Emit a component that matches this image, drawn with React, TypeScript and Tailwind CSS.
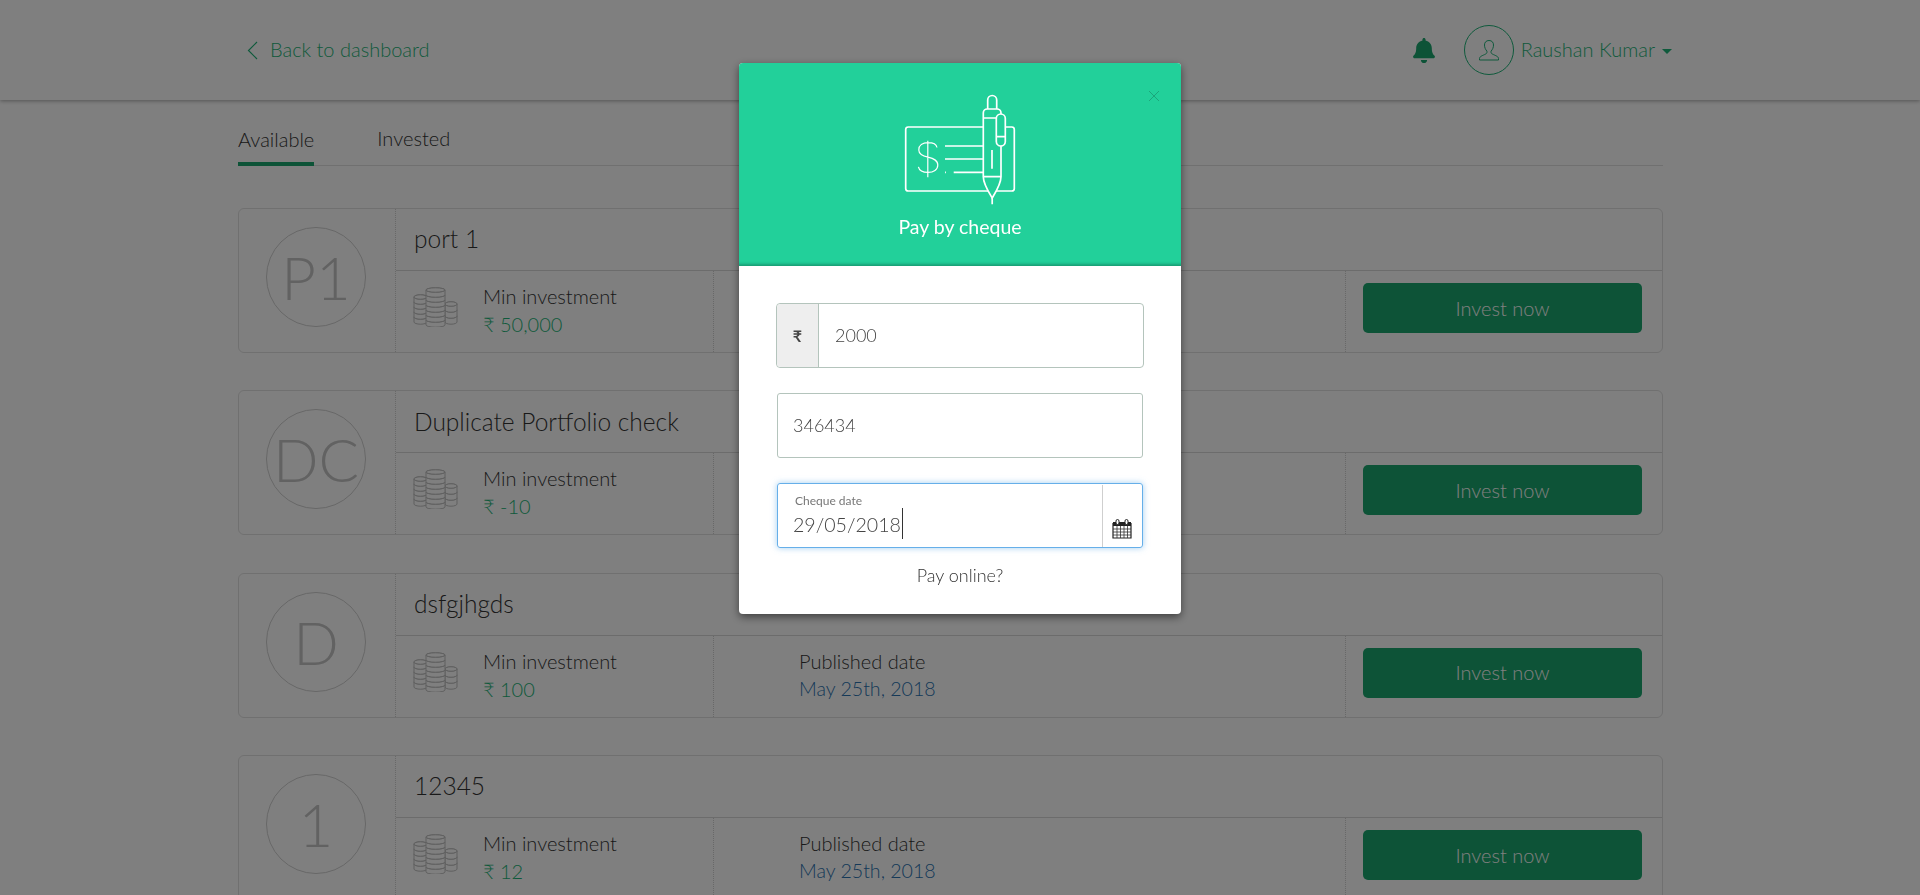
import { FaBell } from "react-icons/fa";

const fontStack = { fontFamily: "Lato, 'Noto Sans', sans-serif" };

type Portfolio = {
  initials: string;
  name: string;
  min: string;
};

const portfolios: Portfolio[] = [
  { initials: "P1", name: "port 1", min: "50,000" },
  { initials: "DC", name: "Duplicate Portfolio check", min: "-10" },
  { initials: "D", name: "dsfgjhgds", min: "100" },
  { initials: "1", name: "12345", min: "12" },
];

function Coins() {
  const stack = (x: number, w: number, top: number, count: number, step: number) => {
    const rx = w / 2;
    const cx = x + rx;
    const items = [];
    for (let i = count - 1; i >= 0; i--) {
      const y = top + i * step;
      items.push(
        <path
          key={i}
          d={`M${x} ${y + 2}a${rx} 2.2 0 0 1 ${w} 0v${step}a${rx} 2.2 0 0 1 -${w} 0z`}
          fill="#fff"
        />,
      );
      items.push(<path key={`t${i}`} d={`M${x} ${y + 2}a${rx} 2.2 0 0 0 ${w} 0`} fill="none" />);
    }
    items.push(<ellipse key="top" cx={cx} cy={top + 2} rx={rx} ry={2.2} fill="#fff" />);
    return items;
  };
  return (
    <svg width="46" height="40" viewBox="0 0 46 40" fill="none" stroke="#bebebe" strokeWidth="1" className="shrink-0 -ml-px">
      {stack(1, 13, 8, 5, 5)}
      {stack(32, 12, 15, 3, 6)}
      {stack(13, 19, 1, 7, 5)}
    </svg>
  );
}

function PortfolioCard({ item }: { item: Portfolio }) {
  return (
    <div className="flex h-[145px] rounded-md border border-[#e0e0e0] mb-[37.4px]">
      <div className="w-[156px] shrink-0 pt-[18px] pl-[27px]">
        <div className="flex h-[100px] w-[100px] items-center justify-center rounded-full border border-[#cfcfcf] text-[60px] font-light text-[#c4c4c4]">
          {item.initials}
        </div>
      </div>
      <div className="flex min-w-0 flex-1 flex-col border-l border-dotted border-[#d0d0d0]">
        <div className="flex h-[62px] shrink-0 items-center border-b border-[#d8d8d8] pl-[18px] text-[24.5px] font-light text-[#333]">
          {item.name}
        </div>
        <div className="flex flex-1">
          <div className="flex w-[317px] items-start pl-[18px] pt-[16px]">
            <Coins />
            <div className="ml-[24px] -mt-[4px]">
              <div className="text-[20px] leading-[27px] font-light text-[#333]">Min investment</div>
              <div className="text-[20px] leading-[28px] font-light text-[#1eb478]">₹ {item.min}</div>
            </div>
          </div>
          <div className="flex w-[632px] flex-col border-l border-dotted border-[#d0d0d0] pl-[85px] pt-[12px]">
            <div className="text-[20px] leading-[27px] font-light text-[#333]">Published date</div>
            <div className="text-[19.6px] leading-[28px] font-light text-[#2a72b0]">May 25th, 2018</div>
          </div>
          <div className="flex-1 border-l border-dotted border-[#d0d0d0] pl-[17px] pt-[12px]">
            <button className="h-[50px] w-[279px] rounded-[5px] bg-[#1ba66e] pb-px text-[20px] font-light text-white">
              Invest now
            </button>
          </div>
        </div>
      </div>
    </div>
  );
}

function ChequeIcon() {
  return (
    <svg width="120" height="120" viewBox="900 90 120 120" fill="none" stroke="#fff" strokeWidth="1.700" className="block">
      <rect x="905.7" y="127" width="108.6" height="64" rx="2.5" />
      <path d="M937 147.500c-.6-3.200-4-4.800-9-4.800-5.400 0-9.200 2.600-9.200 7.200 0 4.500 3.800 6 9.200 7.300 5.600 1.400 9.800 3 9.800 7.800 0 4.600-4.200 7.400-9.800 7.400-5.400 0-8.800-2-9.600-5.600M927.800 140.700v36.600" strokeWidth="1.200" />
      <path d="M945 146h38M945 159h38M953.700 172.300h29.300M945 172.300h.9" />
      <path d="M987.700 109v-9a4.500 4.500 0 0 1 9 0v9" />
      <path fill="#22d09a" d="M983.300 176.700V113a4 4 0 0 1 4-4h9.700a4 4 0 0 1 4 4v63.700c0 7-4.600 14.300-8.800 21.300-4.200-7-8.900-14.300-8.900-21.300z" />
      <path d="M983.300 118h13M983.300 176.700h17.700M992.200 198v6.300M992 150v18.700" />
      <rect x="996.300" y="114" width="9" height="32" rx="4.500" fill="#22d09a" />
      <path d="M996.300 136.700h9" />
    </svg>
  );
}

function CalendarIcon() {
  return (
    <svg width="20" height="20" viewBox="0 0 20 20" className="block">
      <path d="M1 4.500h18V19H1z" fill="#fff" stroke="#222" strokeWidth="1.200" />
      <path d="M1 3h18v4H1z" fill="#222" />
      <path d="M1 10h18M1 13h18M1 16h18M5 7v12M8.500 7v12M12 7v12M15.500 7v12" stroke="#333" strokeWidth=".8" />
      <rect x="4" y="0.500" width="3" height="5" rx="1.500" fill="#fff" stroke="#222" />
      <rect x="13" y="0.500" width="3" height="5" rx="1.500" fill="#fff" stroke="#222" />
    </svg>
  );
}

export default function App() {
  return (
    <div className="relative h-screen overflow-hidden bg-white" style={fontStack}>
      <header className="flex h-[100px] items-center justify-between pl-[247px] pr-[248px] shadow-[0_1px_4px_rgba(0,0,0,0.35)]">
        <div className="flex items-center text-[20px] leading-[24px] font-light text-[#1eb478]">
          <svg width="11" height="19" viewBox="0 0 11 19" fill="none" stroke="#1eb478" strokeWidth="1.200" className="mr-[12px]">
            <path d="M10 1L1.500 9.500 10 18" />
          </svg>
          <span className="-mt-[2px]">Back to dashboard</span>
        </div>
        <div className="flex items-center">
          <FaBell className="mr-[28px] h-[25px] w-[24px] text-[#1ba66e]" />
          <div className="mr-[7px] flex h-[50px] w-[50px] items-center justify-center rounded-full border border-[#1eb478]">
            <svg width="22" height="22" viewBox="0 0 22 22" fill="none" stroke="#1eb478" strokeWidth="1">
              <path d="M11 1.500c-3 0-4.500 2-4.500 4.500 0 2.500 1 4.500 2.300 6 .4.800.2 2-.6 2.700C6.500 16 1.500 17 1.500 19.500v1.500h19v-1.500c0-2.500-5-3.500-6.700-4.800-.8-.7-1-1.900-.6-2.700 1.300-1.500 2.300-3.500 2.300-6 0-2.500-1.500-4.500-4.500-4.500z" />
            </svg>
          </div>
          <span className="-mt-[2px] text-[20px] font-light text-[#1eb478]">Raushan Kumar</span>
          <span className="ml-[7px] mt-[3px] h-0 w-0 border-x-[5px] border-t-[5px] border-x-transparent border-t-[#1eb478]" />
        </div>
      </header>

      <main className="ml-[238px] w-[1425px]">
        <div className="flex h-[66px] items-end gap-[63px] border-b border-[#e0e0e0] text-[20px] font-light text-[#333]">
          <div className="h-[50px] border-b-4 border-[#1ba66e] pt-[8px] -mb-px">Available</div>
          <div className="h-[50px] pt-[8px]">Invested</div>
        </div>
        <div className="pt-[42px]">
          {portfolios.map((item) => (
            <PortfolioCard item={item} key={item.initials} />
          ))}
        </div>
      </main>

      {/* modal backdrop */}
      <div className="fixed inset-0 flex items-start justify-center bg-black/50 pt-[63px]">
        <div className="relative h-[551px] w-[442px] overflow-hidden rounded-[4px] bg-white shadow-[0_3px_9px_rgba(0,0,0,0.5)]">
          <div className="flex h-[203px] flex-col items-center bg-[#22d09a] pt-[27px] shadow-[inset_0_-4px_3px_-2px_rgba(0,0,0,0.25)]">
            <ChequeIcon />
            <div className="mt-[2px] text-[19.5px] font-normal text-white">Pay by cheque</div>
          </div>
          <svg width="12" height="12" viewBox="0 0 12 12" stroke="#000" strokeOpacity=".2" className="absolute top-[27px] right-[21px]">
            <path d="M1 1l10 10M11 1L1 11" />
          </svg>

          <div className="px-[37px] pt-[37px]">
            <div className="flex h-[65px] rounded-[4px] border border-[#b4c4bc] text-[18px] font-light text-[#444]">
              <div className="flex w-[42px] items-center justify-center rounded-l-[4px] border-r border-[#b4c4bc] bg-[#eee] text-[16px] font-bold text-[#444]">
                ₹
              </div>
              <div className="flex items-center pl-[16px]">2000</div>
            </div>

            <div className="mx-px mt-[25px] flex h-[65px] items-center rounded-[3px] border border-[#b4c4bc] pl-[15px] text-[18px] font-light text-[#444]">
              346434
            </div>

            <div className="mx-px mt-[25px] flex h-[65px] rounded-[3px] border border-[#66afe9] shadow-[0_0_6px_rgba(102,175,233,0.6)]">
              <div className="flex-1 pl-[15px]">
                <div className="pl-[2px] pt-[9px] text-[12px] leading-[16px] font-normal text-[#777]">Cheque date</div>
                <div className="mt-[1px] flex items-center text-[19.6px] leading-[28px] font-light text-[#444]">
                  29/05/2018
                  <span className="ml-px -mt-[2px] h-[31px] w-px bg-[#333]" />
                </div>
              </div>
              <div className="mt-[1px] flex w-[40px] items-end justify-center border-l border-[#cfcfcf] pb-[8px] pr-[2px]">
                <CalendarIcon />
              </div>
            </div>

            <div className="mt-[14px] text-center text-[18px] font-light text-[#333]">Pay online?</div>
          </div>
        </div>
      </div>
    </div>
  );
}
